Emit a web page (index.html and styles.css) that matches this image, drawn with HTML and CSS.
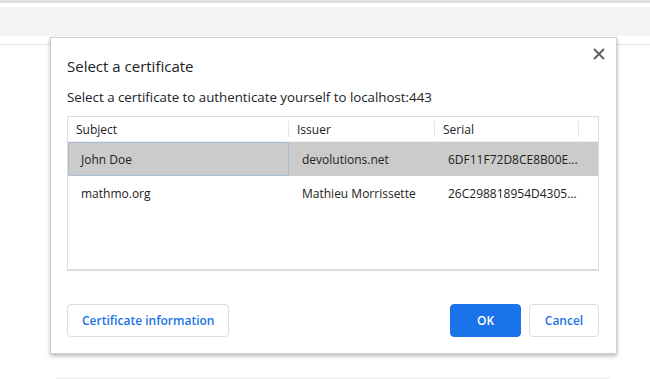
FILE: index.html
```html
<!DOCTYPE html>
<html lang="en">
<head>
    <meta charset="UTF-8">
    <title>Select a certificate</title>
    <link rel="stylesheet" href="styles.css">
</head>
<body>
    <div class="page">
        <div class="tabstrip"></div>
        <div class="toolbar"></div>
        <div class="content"></div>
        <div class="footer-bar"></div>
    </div>

    <div class="dialog">
        <div class="dialog-head">
            <h1>Select a certificate</h1>
            <button class="close" aria-label="Close">
                <svg width="12" height="12" viewBox="0 0 12 12">
                    <path d="M1 1L11 11M11 1L1 11" stroke="#5f6368" stroke-width="2" fill="none"/>
                </svg>
            </button>
        </div>
        <p class="subtitle">Select a certificate to authenticate yourself to localhost:443</p>

        <div class="cert-table">
            <div class="row head">
                <div class="cell subject">Subject</div>
                <div class="cell issuer">Issuer</div>
                <div class="cell serial">Serial</div>
                <div class="cell spare"></div>
            </div>
            <div class="row selected">
                <div class="cell subject focused">John Doe</div>
                <div class="cell issuer">devolutions.net</div>
                <div class="cell serial">6DF11F72D8CE8B00E...</div>
                <div class="cell spare"></div>
            </div>
            <div class="row">
                <div class="cell subject">mathmo.org</div>
                <div class="cell issuer">Mathieu Morrissette</div>
                <div class="cell serial">26C298818954D4305...</div>
                <div class="cell spare"></div>
            </div>
        </div>

        <div class="actions">
            <button class="btn">Certificate information</button>
            <div class="spacer"></div>
            <button class="btn primary">OK</button>
            <button class="btn cancel">Cancel</button>
        </div>
    </div>
</body>
</html>
```

FILE: styles.css
```css
body {
    margin: 0;
    font-family: "Open Sans", "Noto Sans", sans-serif;
    background: #fff;
    overflow: hidden;
}

.page {
    height: 379px;
    display: flex;
    flex-direction: column;
}

.tabstrip {
    height: 3px;
    background: #dee1e6;
    border-bottom: 4px solid #fff;
}

.toolbar {
    height: 29px;
    background: #f1f3f4;
}

.content {
    height: 8px;
    border-bottom: 1px solid #e4e4e4;
}

.footer-bar {
    margin: auto 40px 0 56px;
    height: 2px;
    background: #f4f4f4;
}

.dialog {
    position: absolute;
    left: 50px;
    top: 37px;
    width: 532px;
    height: 299px;
    padding: 0 17px 16px 16px;
    background: #fff;
    border: 1px solid #cfcfcf;
    box-shadow: 0 2px 4px rgba(0, 0, 0, 0.28);
    display: flex;
    flex-direction: column;
}

.dialog-head {
    display: flex;
    justify-content: space-between;
    height: 50px;
}

.dialog-head h1 {
    margin: 18px 0 0;
    font-size: 15px;
    font-weight: 400;
    color: #202124;
}

.close {
    margin: 9px -8px 0 0;
    padding: 0;
    width: 16px;
    height: 16px;
    border: none;
    background: none;
}

.subtitle {
    margin: 0;
    font-size: 13.3px;
    color: #202124;
    line-height: 18px;
}

.cert-table {
    margin-top: 10px;
    height: 152px;
    border: 1px solid #dcdcdc;
    border-bottom-width: 2px;
    font-size: 12px;
    color: #222;
}

.row {
    display: flex;
    height: 34px;
    align-items: center;
}

.row.head {
    height: 24px;
    border-bottom: 1px solid #f0f0f0;
}

.cell {
    padding-left: 13px;
    box-sizing: border-box;
    height: 100%;
    display: flex;
    align-items: center;
}

.head .cell {
    padding-left: 8px;
    border-right: 1px solid #e5e5e5;
    height: 16px;
}

.subject { width: 221px; }
.issuer { width: 146px; }
.serial { width: 144px; }
.spare { flex: 1; }

.head .spare { border-right: none; }

.row.selected {
    background: #cbcbcb;
}

.cell.focused {
    border: 1px solid #a9bcd6;
    border-radius: 2px;
    padding-left: 12px;
}

.actions {
    margin-top: auto;
    display: flex;
    gap: 8px;
}

.spacer { flex: 1; }

.btn {
    height: 33px;
    padding: 0 14px;
    border: 1px solid #dadce0;
    border-radius: 4px;
    background: #fff;
    color: #1a73e8;
    font-family: inherit;
    font-size: 12px;
    font-weight: 600;
}

.btn.primary {
    width: 71px;
    background: #1a73e8;
    border-color: #1a73e8;
    color: #fff;
}

.btn.cancel {
    width: 70px;
}
```
